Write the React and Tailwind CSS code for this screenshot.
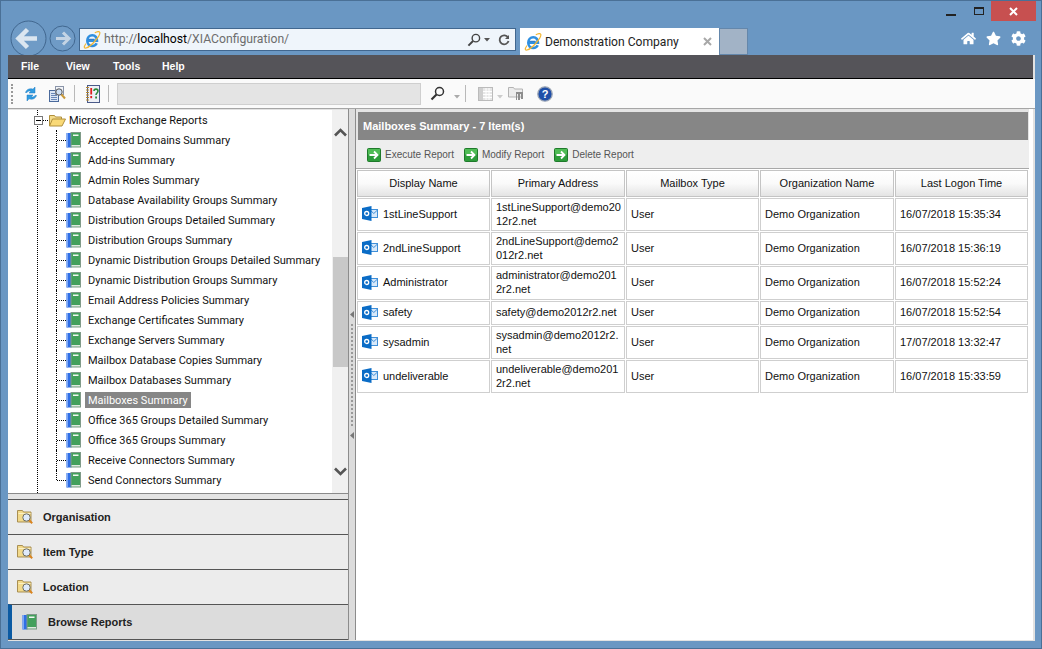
import { FaHome, FaStar, FaCog } from "react-icons/fa";

const reports = [
  "Accepted Domains Summary",
  "Add-ins Summary",
  "Admin Roles Summary",
  "Database Availability Groups Summary",
  "Distribution Groups Detailed Summary",
  "Distribution Groups Summary",
  "Dynamic Distribution Groups Detailed Summary",
  "Dynamic Distribution Groups Summary",
  "Email Address Policies Summary",
  "Exchange Certificates Summary",
  "Exchange Servers Summary",
  "Mailbox Database Copies Summary",
  "Mailbox Databases Summary",
  "Mailboxes Summary",
  "Office 365 Groups Detailed Summary",
  "Office 365 Groups Summary",
  "Receive Connectors Summary",
  "Send Connectors Summary",
];

const mailboxes = [
  { name: "1stLineSupport", address: ["1stLineSupport@demo20", "12r2.net"], time: "16/07/2018 15:35:34", h: "h-[33px]" },
  { name: "2ndLineSupport", address: ["2ndLineSupport@demo2", "012r2.net"], time: "16/07/2018 15:36:19", h: "h-[33px]" },
  { name: "Administrator", address: ["administrator@demo201", "2r2.net"], time: "16/07/2018 15:52:24", h: "h-[34px]" },
  { name: "safety", address: ["safety@demo2012r2.net"], time: "16/07/2018 15:52:54", h: "h-[24px]" },
  { name: "sysadmin", address: ["sysadmin@demo2012r2.", "net"], time: "17/07/2018 13:32:47", h: "h-[33px]" },
  { name: "undeliverable", address: ["undeliverable@demo201", "2r2.net"], time: "16/07/2018 15:33:59", h: "h-[33px]" },
];

function IeLogo({ size = 18 }) {
  return (
    <svg width={size} height={size} viewBox="0 0 18 18" className="shrink-0">
      <path d="M4.500 9.800h9.500c.2-3.200-1.800-5.500-4.700-5.500-3 0-5 2.300-5 5.400 0 3.200 2.100 5.300 5 5.300 2.100 0 3.600-1 4.400-2.700" fill="none" stroke="#2f8fe0" strokeWidth="2.600" />
      <path d="M5.500 8.300h6" stroke="#1d6fc4" strokeWidth="1" />
      <path d="M3 12.500C.5 16 1 17.500 3 17c2.500-.6 6-3.400 9-7 3-3.500 5.300-7 4.800-8.600-.4-1.300-2.500-1-5 .4" fill="none" stroke="#f2b632" strokeWidth="1.200" />
    </svg>
  );
}

function BookIcon() {
  return (
    <svg width="15" height="16" viewBox="0 0 15 16" className="shrink-0">
      <rect x="0.500" y="1" width="5" height="14.500" fill="#2f6ee6" />
      <rect x="0.500" y="1" width="1.500" height="14.500" fill="#7fa8f4" />
      <rect x="5" y="0.500" width="9.500" height="14.500" fill="#43a05c" stroke="#7f9a88" />
      <rect x="5.500" y="13" width="8.500" height="1.500" fill="#dfe8e0" />
      <rect x="7" y="2.500" width="5.500" height="1.500" fill="#f2f7f2" />
    </svg>
  );
}

function OpenFolderIcon() {
  return (
    <svg width="17" height="13" viewBox="0 0 17 13" className="shrink-0">
      <path d="M.5 12V1.500h5l1 1.500h6v2" fill="#f4dc8c" stroke="#b08f3c" />
      <path d="M.5 12 3.500 5h13l-3.500 7z" fill="#f9d977" stroke="#b08f3c" />
    </svg>
  );
}

function SearchFolderIcon() {
  return (
    <svg width="17" height="16" viewBox="0 0 17 16" className="shrink-0">
      <path d="M.5 13V1.500h5l1 1.500h7.500v10z" fill="#f2d98a" stroke="#a98f52" />
      <rect x="1.500" y="4" width="12" height="1" fill="#fbf0c4" />
      <circle cx="9.500" cy="8.500" r="3.700" fill="#dfeafa" stroke="#6c6c60" />
      <path d="m12.200 11.200 3 3" stroke="#d98420" strokeWidth="2" />
    </svg>
  );
}

function OutlookIcon() {
  return (
    <svg width="16" height="15" viewBox="0 0 16 15" className="shrink-0">
      <rect x="8" y="3.500" width="7.500" height="8" fill="#d8e9fa" stroke="#3f8fd8" />
      <path d="m8 4 3.800 3.500L15.500 4" fill="none" stroke="#3f8fd8" />
      <path d="M0 2 9.500 0v15L0 13z" fill="#0a6cc6" />
      <circle cx="4.700" cy="7.500" r="2" fill="none" stroke="#fff" strokeWidth="1.300" />
    </svg>
  );
}

function GreenArrow() {
  return (
    <svg width="14" height="14" viewBox="0 0 14 14" className="shrink-0">
      <rect x="0.500" y="0.500" width="13" height="13" rx="1" fill="#2d9c3a" stroke="#1f7a2b" />
      <rect x="1" y="1" width="12" height="5.500" fill="#4fbc55" />
      <path d="M2.500 7h7.500M7 3.500 10.500 7 7 10.500" fill="none" stroke="#fff" strokeWidth="1.800" />
    </svg>
  );
}

function Chevron({ up }) {
  return (
    <svg width="13" height="9" viewBox="0 0 13 9">
      <path d={up ? "M1 7.500 6.500 2 12 7.500" : "M1 1.500 6.500 7 12 1.500"} fill="none" stroke="#555" strokeWidth="2.600" />
    </svg>
  );
}

function Caret({ color = "#777" }) {
  return (
    <svg width="6" height="4" viewBox="0 0 6 4" className="shrink-0">
      <path d="M0 0h6L3 3.500z" fill={color} />
    </svg>
  );
}

function MagnifierIcon({ size = 15, color = "#333" }) {
  return (
    <svg width={size} height={size} viewBox="0 0 15 15" className="shrink-0">
      <circle cx="9.500" cy="5.500" r="4" fill="none" stroke={color} strokeWidth="1.500" />
      <path d="M6.500 8.500 1.500 13.500" stroke={color} strokeWidth="2.100" />
    </svg>
  );
}

function RefreshIcon() {
  return (
    <svg width="14" height="16" viewBox="0 0 14 16" className="shrink-0">
      <path d="M1.500 6.500C2.500 3.500 5.500 2 9 3.200L11 1v6H5l2-1.800c-2-.5-3.500.2-4 1.300z" fill="#2f9be0" stroke="#1c79c0" strokeWidth=".5" />
      <path d="M12.500 9.500c-1 3-4 4.500-7.500 3.300L3 15V9h6l-2 1.800c2 .5 3.500-.2 4-1.300z" fill="#2f9be0" stroke="#1c79c0" strokeWidth=".5" />
    </svg>
  );
}

function DocSearchIcon() {
  return (
    <svg width="17" height="16" viewBox="0 0 17 16" className="shrink-0">
      <rect x="0.500" y="4.500" width="9" height="11" fill="#dce6f5" stroke="#4a6a9c" />
      <path d="M2 7.500h6M2 9.500h6M2 11.500h6M2 13.500h6" stroke="#6a88b8" />
      <rect x="6.500" y="0.500" width="8" height="8" fill="#f2f4f8" stroke="#8a94a8" />
      <circle cx="10" cy="6" r="3.200" fill="#cfe0f5" stroke="#555" />
      <path d="m12.500 8.500 3.500 4" stroke="#c89a3c" strokeWidth="2" />
    </svg>
  );
}

function NotebookIcon() {
  return (
    <svg width="14" height="18" viewBox="0 0 14 18" className="shrink-0">
      <rect x="1.500" y="0.500" width="12" height="17" fill="#eef0f6" stroke="#4a5a88" />
      <path d="M0 2.500h3M0 5h3M0 7.500h3M0 10h3M0 12.500h3M0 15h3" stroke="#b88a30" />
      <rect x="4.300" y="3" width="1.800" height="6.500" fill="#e02020" />
      <rect x="4.300" y="11" width="1.800" height="2.200" fill="#e02020" />
      <path d="M8 6c0-2.500 4-2.500 4 0 0 2-2 2-2 4" fill="none" stroke="#2c8a3a" strokeWidth="1.600" />
      <rect x="9.200" y="11.500" width="1.800" height="2" fill="#2c8a3a" />
    </svg>
  );
}

function ColumnsIcon() {
  return (
    <svg width="15" height="14" viewBox="0 0 15 14" className="shrink-0">
      <rect x="0.500" y="0.500" width="14" height="13" fill="#e6e6e6" stroke="#bbb" />
      <rect x="1" y="1" width="4" height="12" fill="#cfcfcf" />
      <path d="M8 1v12M11 1v12M5 4.500h9M5 7.500h9M5 10.500h9" stroke="#fff" />
    </svg>
  );
}

function GreyFolderIcon() {
  return (
    <svg width="16" height="15" viewBox="0 0 16 15" className="shrink-0">
      <path d="M.5 11V1.500h5l1 1.500h8v8z" fill="#ececec" stroke="#b4b4b4" />
      <path d="M8 6h7v7h-2V8h-1v6h-2V8H9v6H8z" fill="#8d8d8d" />
    </svg>
  );
}

function HelpIcon() {
  return (
    <svg width="16" height="16" viewBox="0 0 16 16" className="shrink-0">
      <circle cx="8" cy="8" r="7.200" fill="#1f4fa8" stroke="#9aa4b4" strokeWidth="1.300" />
      <text x="8" y="12" textAnchor="middle" fontSize="11" fontWeight="700" fontFamily="Liberation Sans, sans-serif" fill="#fff">?</text>
    </svg>
  );
}

function ToolSep() {
  return <div className="w-px h-[17px] bg-[#b9b9b9] shrink-0" />;
}

function TreeRow({ label, selected, last }) {
  return (
    <div className="flex h-5 items-center">
      <div className={`w-0 border-l border-dotted border-black ${last ? "h-[10px] self-start" : "h-full"}`} />
      <div className="w-[9px] border-t border-dotted border-black" />
      <BookIcon />
      <span className={`ml-[4px] px-[3px] pt-px leading-[15px] whitespace-nowrap ${selected ? "bg-[#868686] text-white" : "text-[#111]"}`}>
        {label}
      </span>
    </div>
  );
}

function SectionRow({ label, active }) {
  return (
    <div className={`h-[35px] flex items-center border-t border-[#555] text-[11px] font-bold text-[#222] font-['Liberation_Sans',sans-serif] ${active ? "bg-[#dcdcdc] border-l-[4px] border-l-[#0b5aa2] pl-[10px] gap-[11px]" : "bg-[#ececec] pl-[9px] gap-[9px]"}`}>
      {active ? <BookIcon /> : <SearchFolderIcon />}
      <span>{label}</span>
    </div>
  );
}

function ActionBtn({ label }) {
  return (
    <div className="flex items-center gap-[4px]">
      <GreenArrow />
      <span className="whitespace-nowrap">{label}</span>
    </div>
  );
}

const headerCell = "h-[27px] border border-[#c4c4c4] bg-gradient-to-b from-white via-[#fafafa] to-[#e4e4e4] text-center font-normal text-[#111]";
const bodyCell = "border border-[#cfcfcf] pl-[4px] pr-0 pb-[2px] text-left align-middle leading-[14px] text-[#111]";

export default function App() {
  return (
    <div className="w-[1042px] h-[649px] overflow-hidden flex flex-col bg-[#6a97c3] border border-[#4a7096] font-['Roboto',sans-serif]">
      {/* ie chrome */}
      <div className="h-[54px] flex shrink-0">
        <div className="flex items-start pt-[19px] pl-[9px]">
          <svg width="37" height="37" viewBox="0 0 37 37" className="shrink-0">
            <circle cx="18.500" cy="18.500" r="17.500" fill="#6f9bc6" stroke="#41678f" />
            <path d="M9 18.500h18M17.500 9.500l-9 9 9 9" fill="none" stroke="#dbe6f0" strokeWidth="4.500" />
          </svg>
          <svg width="27" height="27" viewBox="0 0 27 27" className="shrink-0 mt-[5px] ml-[2px]">
            <circle cx="13.500" cy="13.500" r="12.500" fill="#6f9bc6" stroke="#41678f" />
            <path d="M7 13.500h12M14 7.500l6 6-6 6" fill="none" stroke="#c4d4e4" strokeWidth="3" />
          </svg>
          <div className="mt-[8px] ml-[3px] w-[437px] h-[23px] flex items-center bg-[#eff5fb] border border-[#41678f] pl-[3px] pr-[5px] text-[12.200px] text-[#6d6d6d]">
            <IeLogo />
            <span className="ml-[3px] whitespace-nowrap">
              http://<span className="text-black">localhost</span>/XIAConfiguration/
            </span>
            <div className="ml-auto flex items-center gap-[3px]">
              <MagnifierIcon size={14} color="#444" />
              <Caret color="#555" />
              <svg width="12" height="12" viewBox="0 0 12 12" className="ml-[5px]">
                <path d="M10 3.500A4.500 4.500 0 1 0 10.500 7" fill="none" stroke="#555" strokeWidth="1.800" />
                <path d="M11 1v4H7z" fill="#555" />
              </svg>
            </div>
          </div>
          <div className="mt-[8px] ml-[4px] w-[199px] h-[27px] flex items-center bg-white pl-[4px] pr-[5px] text-[12.100px] text-[#222]">
            <IeLogo />
            <span className="ml-[3px] pt-px whitespace-nowrap">Demonstration Company</span>
            <svg width="9" height="9" viewBox="0 0 9 9" className="ml-auto mr-[2px]">
              <path d="m1 1 7 7M8 1 1 8" stroke="#a8a8a8" strokeWidth="2" />
            </svg>
          </div>
          <div className="mt-[8px] w-[29px] h-[27px] bg-[#a2b3c6] border border-[#6487ab]" />
        </div>
        <div className="flex-1 flex flex-col items-end">
          <div className="flex h-[20px] items-center pr-[5px]">
            <div className="w-[10px] h-[2px] bg-[#222] mt-[8px] mr-[18px]" />
            <div className="w-[10px] h-[8px] border border-t-2 border-[#222] mr-[7px]" />
            <div className="w-[45px] h-[20px] bg-[#c75050] flex items-center justify-center">
              <svg width="9" height="9" viewBox="0 0 9 9">
                <path d="m1 1 7 7M8 1 1 8" stroke="#fff" strokeWidth="2" />
              </svg>
            </div>
          </div>
          <div className="flex items-center gap-[10px] pr-[15px] mt-[10px] text-white text-[15px]">
            <FaHome />
            <FaStar />
            <FaCog />
          </div>
        </div>
      </div>

      {/* page */}
      <div className="flex-1 min-h-0 flex flex-col ml-[7px] mr-[6px] mb-[7px] bg-[#e2e2e2]">
        <div className="h-[23px] shrink-0 flex items-center pl-[13px] bg-[#555459] mr-[2px] text-white text-[10.500px] font-bold font-['Liberation_Sans',sans-serif]">
          <span className="w-[45px]">File</span>
          <span className="w-[47px]">View</span>
          <span className="w-[49px]">Tools</span>
          <span>Help</span>
        </div>
        <div className="h-px bg-black mr-[2px] shrink-0" />
        <div className="h-[30px] shrink-0 flex items-center bg-[#fafafa] border-b border-[#a6a6a6]">
          <div className="ml-[3px] w-[2px] h-[20px] border-l-2 border-dotted border-[#999]" />
          <div className="ml-[11px]"><RefreshIcon /></div>
          <div className="ml-[11px]"><DocSearchIcon /></div>
          <div className="ml-[8px]"><ToolSep /></div>
          <div className="ml-[11px]"><NotebookIcon /></div>
          <div className="ml-[8px]"><ToolSep /></div>
          <div className="ml-[8px] w-[304px] h-[22px] bg-[#e4e4e4] border border-[#cfcfcf]" />
          <div className="ml-[9px]"><MagnifierIcon /></div>
          <div className="ml-[9px] mt-[6px]"><Caret color="#aaa" /></div>
          <div className="ml-[5px]"><ToolSep /></div>
          <div className="ml-[12px]"><ColumnsIcon /></div>
          <div className="ml-[4px] mt-[6px]"><Caret color="#ccc" /></div>
          <div className="ml-[5px]"><GreyFolderIcon /></div>
          <div className="ml-[13px]"><HelpIcon /></div>
        </div>

        <div className="flex-1 min-h-0 flex">
          {/* left pane */}
          <div className="w-[340px] shrink-0 flex flex-col pt-px">
            <div className="h-[383px] shrink-0 flex bg-white overflow-hidden text-[11px]">
              <div className="w-[324px] ml-[29px] mr-[-29px] border-l border-dotted border-black">
                <div className="flex h-5 items-center">
                  <div className="w-[9px] h-[9px] -ml-[4px] bg-white border border-[#777] flex items-center justify-center">
                    <div className="w-[5px] h-px bg-black" />
                  </div>
                  <div className="w-[5px] border-t border-dotted border-black" />
                  <div className="ml-[1px]"><OpenFolderIcon /></div>
                  <span className="ml-[3px] pt-px leading-[15px] text-[#111] whitespace-nowrap">Microsoft Exchange Reports</span>
                </div>
                <div className="ml-[18px]">
                  {reports.map((r, i) => (
                    <TreeRow key={r} label={r} selected={r === "Mailboxes Summary"} last={i === reports.length - 1} />
                  ))}
                </div>
              </div>
              <div className="ml-auto w-[16px] shrink-0 flex flex-col items-center bg-[#f0f0f0]">
                <div className="h-[147px] w-full pt-[18px] flex justify-center">
                  <Chevron up />
                </div>
                <div className="h-[110px] w-[15px] ml-px bg-[#c8c8c8]" />
                <div className="mt-[100px]"><Chevron /></div>
              </div>
            </div>
            <div className="h-[6px] shrink-0 bg-[#e4e4e4] border-t border-[#8a8a8a]" />
            <SectionRow label="Organisation" />
            <SectionRow label="Item Type" />
            <SectionRow label="Location" />
            <SectionRow label="Browse Reports" active />
            <div className="h-px bg-[#555]" />
          </div>

          {/* splitter */}
          <div className="w-[8px] shrink-0 h-[531px] flex flex-col items-center justify-center border-x border-[#8c8c8c] bg-[#dcdcdc]">
            <svg width="4" height="7" viewBox="0 0 4 7"><path d="M4 0v7L0 3.500z" fill="#777" /></svg>
            <div className="h-[102px] w-[2px] my-[6px] border-l-2 border-dotted border-[#999]" />
            <svg width="4" height="7" viewBox="0 0 4 7"><path d="M4 0v7L0 3.500z" fill="#777" /></svg>
          </div>

          {/* right pane */}
          <div className="flex-1 min-w-0 h-[531px] bg-white border-r-2 border-[#e2e2e2] font-['Liberation_Sans',sans-serif]">
            <div className="mr-[4px] bg-[#e4e4e4] pt-[3px] pl-[2px] pr-[1px]">
              <div className="h-[28px] flex items-center pl-[5px] bg-[#868686] text-white text-[11px] font-bold">
                Mailboxes Summary - 7 Item(s)
              </div>
            </div>
            <div className="h-[29px] mr-[4px] pt-px flex items-center gap-[10px] pl-[11px] bg-[#eeeeee] border-b border-[#a8a8a8] text-[10px] text-[#555]">
              <ActionBtn label="Execute Report" />
              <ActionBtn label="Modify Report" />
              <ActionBtn label="Delete Report" />
            </div>
            <table className="w-[673px] table-fixed border-separate border-spacing-[1px] text-[11px]">
              <thead>
                <tr>
                  <th className={`w-[133px] ${headerCell}`}>Display Name</th>
                  <th className={`w-[134px] ${headerCell}`}>Primary Address</th>
                  <th className={`w-[133px] ${headerCell}`}>Mailbox Type</th>
                  <th className={`w-[134px] ${headerCell}`}>Organization Name</th>
                  <th className={`w-[133px] ${headerCell}`}>Last Logon Time</th>
                </tr>
              </thead>
              <tbody>
                {mailboxes.map((m) => (
                  <tr key={m.name} className={m.h}>
                    <td className={bodyCell}>
                      <div className="flex items-center gap-[5px]">
                        <OutlookIcon />
                        <span>{m.name}</span>
                      </div>
                    </td>
                    <td className={bodyCell}>
                      {m.address.map((a) => (
                        <div key={a}>{a}</div>
                      ))}
                    </td>
                    <td className={bodyCell}>User</td>
                    <td className={bodyCell}>Demo Organization</td>
                    <td className={bodyCell}>{m.time}</td>
                  </tr>
                ))}
              </tbody>
            </table>
          </div>
        </div>
      </div>
    </div>
  );
}
